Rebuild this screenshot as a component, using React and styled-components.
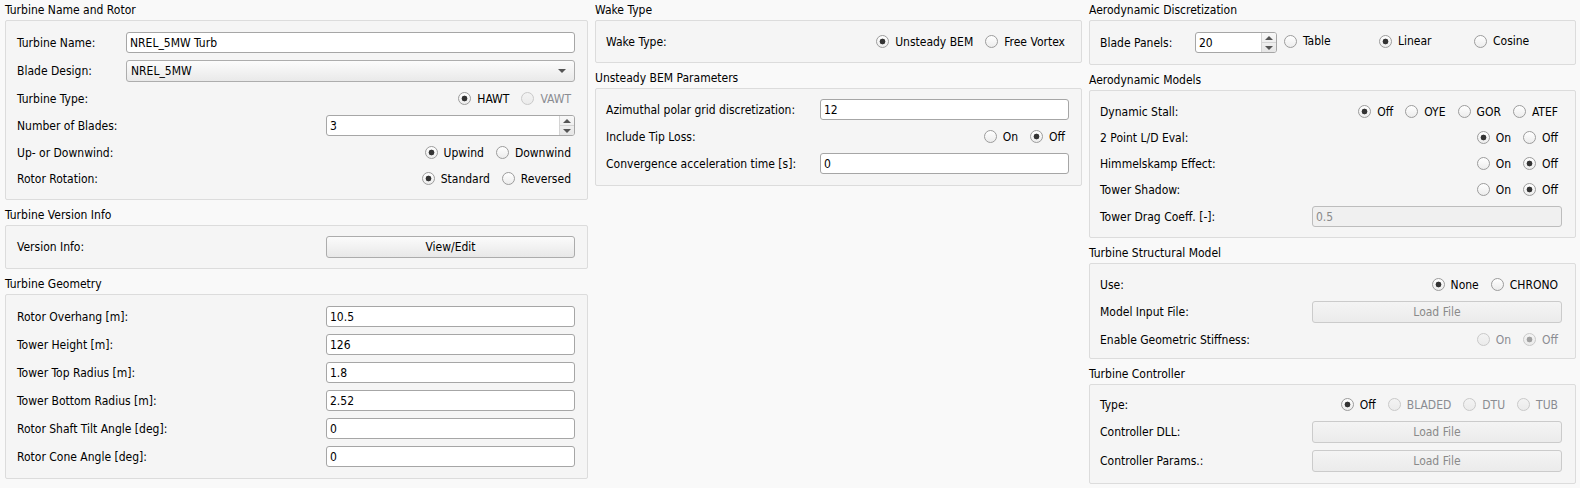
import React from "react";
import styled, { createGlobalStyle } from "styled-components";

const GlobalStyle = createGlobalStyle`
  html, body {
    margin: 0;
    padding: 0;
    background: #f9f9f9;
  }
  body {
    font-family: "DejaVu Sans Condensed", "DejaVu Sans", sans-serif;
    font-size: 12px;
    color: #000;
  }
`;

const Page = styled.div`
  display: grid;
  grid-template-columns: 583px 487px 487px;
  column-gap: 7px;
  align-items: start;
  width: 1580px;
  height: 488px;
  box-sizing: border-box;
  padding: 0 4px 0 5px;
  background: #f9f9f9;
`;

const Column = styled.div`
  display: flex;
  flex-direction: column;
`;

const Section = styled.section`
  display: flex;
  flex-direction: column;
  &:not(:first-child) {
    margin-top: 5px;
  }
`;

const Title = styled.div`
  height: 20px;
  line-height: 20px;
  white-space: nowrap;
`;

const Box = styled.div`
  display: flex;
  flex-direction: column;
  gap: 7px;
  padding: ${p => p.$pad || "11px 12px 11px 11px"};
  border: 1px solid #dcdcdc;
  border-radius: 2px;
  background: #f5f5f5;
`;

const Row = styled.div`
  display: grid;
  grid-template-columns: ${p => p.$cols || `${p.$label || 309}px 1fr`};
  align-items: center;
  min-height: 19px;
`;

const Label = styled.span`
  white-space: nowrap;
`;

const LineEdit = styled.input`
  height: 21px;
  box-sizing: border-box;
  width: 100%;
  margin: 0;
  padding: 0 3px;
  border: 1px solid ${p => (p.disabled ? "#bdbdbd" : "#a6a6a6")};
  border-radius: 3px;
  background: ${p => (p.disabled ? "#f0f0f0" : "#fff")};
  color: ${p => (p.disabled ? "#8a8a8a" : "#000")};
  font: inherit;
  outline: none;
`;

const Combo = styled.div`
  position: relative;
  height: 22px;
  box-sizing: border-box;
  display: flex;
  align-items: center;
  padding: 0 4px;
  border: 1px solid #adadad;
  border-radius: 3px;
  background: linear-gradient(#fcfcfc, #e9e9e9);
  &::after {
    content: "";
    position: absolute;
    right: 8px;
    top: 8px;
    border-left: 4px solid transparent;
    border-right: 4px solid transparent;
    border-top: 4px solid #555;
  }
`;

const Spin = styled.div`
  display: flex;
  height: 21px;
  width: ${p => p.$width || "100%"};
  box-sizing: border-box;
  border: 1px solid #a6a6a6;
  border-radius: 3px;
  background: #fff;
  overflow: hidden;
`;

const SpinText = styled.span`
  flex: 1;
  display: flex;
  align-items: center;
  padding: 0 3px;
`;

const SpinArrows = styled.span`
  width: 14px;
  display: flex;
  flex-direction: column;
  border-left: 1px solid #d4d4d4;
  background: linear-gradient(#f8f8f8, #e6e6e6);
`;

const Arrow = styled.span`
  flex: 1;
  display: flex;
  align-items: center;
  justify-content: center;
  &::before {
    content: "";
    border-left: 4px solid transparent;
    border-right: 4px solid transparent;
    ${p => (p.$down ? "border-top" : "border-bottom")}: 4px solid #555;
  }
  & + & {
    border-top: 1px solid #d4d4d4;
  }
`;

const Button = styled.div`
  height: 22px;
  box-sizing: border-box;
  display: flex;
  align-items: center;
  justify-content: center;
  border: 1px solid ${p => (p.$disabled ? "#cbcbcb" : "#acacac")};
  border-radius: 3px;
  background: ${p =>
    p.$disabled ? "linear-gradient(#f4f4f4, #ebebeb)" : "linear-gradient(#fbfbfb, #e8e8e8)"};
  color: ${p => (p.$disabled ? "#8a8a8a" : "#000")};
`;

const Radios = styled.div`
  justify-self: end;
  display: flex;
  align-items: center;
  gap: 12px;
  margin-right: 4px;
`;

const Option = styled.span`
  display: inline-flex;
  align-items: center;
  gap: 6px;
  white-space: nowrap;
  color: ${p => (p.$disabled ? "#8a8c92" : "#000")};
`;

const Dot = styled.span`
  width: 13px;
  height: 13px;
  box-sizing: border-box;
  border-radius: 50%;
  border: 1px solid ${p => (p.$disabled ? "#c9c9c9" : "#9c9c9c")};
  background: ${p => {
    const fill = p.$disabled ? "linear-gradient(#f3f3f3, #ebebeb)" : "linear-gradient(#ffffff, #ececec)";
    if (!p.$checked) return fill;
    const dot = p.$disabled ? "#a0a0a0" : "#333";
    return `radial-gradient(circle, ${dot} 0 2.6px, transparent 3.2px), ${fill}`;
  }};
`;

const Radio = ({ label, checked, disabled }) => (
  <Option $disabled={disabled}>
    <Dot $checked={checked} $disabled={disabled} />
    {label}
  </Option>
);

const RadioRow = ({ label, options, labelWidth }) => (
  <Row $label={labelWidth}>
    <Label>{label}</Label>
    <Radios>
      {options.map(o => (
        <Radio key={o.label} {...o} />
      ))}
    </Radios>
  </Row>
);

const SpinBox = ({ value, width }) => (
  <Spin $width={width}>
    <SpinText>{value}</SpinText>
    <SpinArrows>
      <Arrow />
      <Arrow $down />
    </SpinArrows>
  </Spin>
);

const onOff = on => [
  { label: "On", checked: on },
  { label: "Off", checked: !on },
];

const geometry = [
  ["Rotor Overhang [m]:", "10.5"],
  ["Tower Height [m]:", "126"],
  ["Tower Top Radius [m]:", "1.8"],
  ["Tower Bottom Radius [m]:", "2.52"],
  ["Rotor Shaft Tilt Angle [deg]:", "0"],
  ["Rotor Cone Angle [deg]:", "0"],
];

const CellStart = styled.div`
  justify-self: start;
`;

export default function App() {
  return (
    <>
      <GlobalStyle />
      <Page>
        <Column>
          <Section>
            <Title>Turbine Name and Rotor</Title>
            <Box>
              <Row $label={109}>
                <Label>Turbine Name:</Label>
                <LineEdit readOnly value="NREL_5MW Turb" />
              </Row>
              <Row $label={109}>
                <Label>Blade Design:</Label>
                <Combo>NREL_5MW</Combo>
              </Row>
              <RadioRow
                label="Turbine Type:"
                options={[
                  { label: "HAWT", checked: true },
                  { label: "VAWT", disabled: true },
                ]}
              />
              <Row>
                <Label>Number of Blades:</Label>
                <SpinBox value="3" />
              </Row>
              <RadioRow
                label="Up- or Downwind:"
                options={[{ label: "Upwind", checked: true }, { label: "Downwind" }]}
              />
              <RadioRow
                label="Rotor Rotation:"
                options={[{ label: "Standard", checked: true }, { label: "Reversed" }]}
              />
            </Box>
          </Section>
          <Section>
            <Title>Turbine Version Info</Title>
            <Box $pad="10px 12px 10px 11px">
              <Row>
                <Label>Version Info:</Label>
                <Button>View/Edit</Button>
              </Row>
            </Box>
          </Section>
          <Section>
            <Title>Turbine Geometry</Title>
            <Box>
              {geometry.map(([label, value]) => (
                <Row key={label}>
                  <Label>{label}</Label>
                  <LineEdit readOnly value={value} />
                </Row>
              ))}
            </Box>
          </Section>
        </Column>

        <Column>
          <Section>
            <Title>Wake Type</Title>
            <Box $pad="11px 12px 11px 10px">
              <RadioRow
                label="Wake Type:"
                labelWidth={214}
                options={[{ label: "Unsteady BEM", checked: true }, { label: "Free Vortex" }]}
              />
            </Box>
          </Section>
          <Section>
            <Title>Unsteady BEM Parameters</Title>
            <Box $pad="10px 12px 11px 10px">
              <Row $label={214}>
                <Label>Azimuthal polar grid discretization:</Label>
                <LineEdit readOnly value="12" />
              </Row>
              <RadioRow label="Include Tip Loss:" labelWidth={214} options={onOff(false)} />
              <Row $label={214}>
                <Label>Convergence acceleration time [s]:</Label>
                <LineEdit readOnly value="0" />
              </Row>
            </Box>
          </Section>
        </Column>

        <Column>
          <Section>
            <Title>Aerodynamic Discretization</Title>
            <Box $pad="11px 13px 11px 10px">
              <Row $cols="95px 89px 95px 95px 1fr">
                <Label>Blade Panels:</Label>
                <SpinBox value="20" width="82px" />
                <CellStart>
                  <Radio label="Table" />
                </CellStart>
                <CellStart>
                  <Radio label="Linear" checked />
                </CellStart>
                <CellStart>
                  <Radio label="Cosine" />
                </CellStart>
              </Row>
            </Box>
          </Section>
          <Section>
            <Title>Aerodynamic Models</Title>
            <Box $pad="11px 13px 10px 10px">
              <RadioRow
                label="Dynamic Stall:"
                labelWidth={212}
                options={[
                  { label: "Off", checked: true },
                  { label: "OYE" },
                  { label: "GOR" },
                  { label: "ATEF" },
                ]}
              />
              <RadioRow label="2 Point L/D Eval:" labelWidth={212} options={onOff(true)} />
              <RadioRow label="Himmelskamp Effect:" labelWidth={212} options={onOff(false)} />
              <RadioRow label="Tower Shadow:" labelWidth={212} options={onOff(false)} />
              <Row $label={212}>
                <Label>Tower Drag Coeff. [-]:</Label>
                <LineEdit disabled value="0.5" />
              </Row>
            </Box>
          </Section>
          <Section>
            <Title>Turbine Structural Model</Title>
            <Box $pad="11px 13px 9px 10px">
              <RadioRow
                label="Use:"
                labelWidth={212}
                options={[{ label: "None", checked: true }, { label: "CHRONO" }]}
              />
              <Row $label={212}>
                <Label>Model Input File:</Label>
                <Button $disabled>Load File</Button>
              </Row>
              <RadioRow
                label="Enable Geometric Stiffness:"
                labelWidth={212}
                options={[
                  { label: "On", disabled: true },
                  { label: "Off", checked: true, disabled: true },
                ]}
              />
            </Box>
          </Section>
          <Section>
            <Title>Turbine Controller</Title>
            <Box $pad="10px 13px 11px 10px">
              <RadioRow
                label="Type:"
                labelWidth={212}
                options={[
                  { label: "Off", checked: true },
                  { label: "BLADED", disabled: true },
                  { label: "DTU", disabled: true },
                  { label: "TUB", disabled: true },
                ]}
              />
              <Row $label={212}>
                <Label>Controller DLL:</Label>
                <Button $disabled>Load File</Button>
              </Row>
              <Row $label={212}>
                <Label>Controller Params.:</Label>
                <Button $disabled>Load File</Button>
              </Row>
            </Box>
          </Section>
        </Column>
      </Page>
    </>
  );
}
